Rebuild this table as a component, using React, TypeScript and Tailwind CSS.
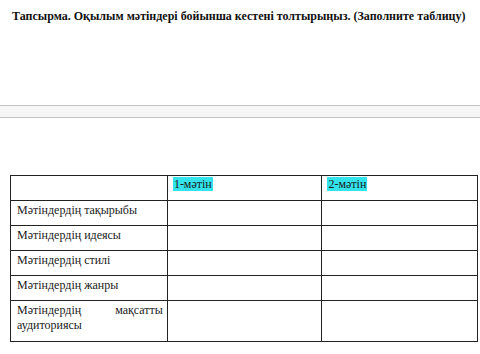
import React from "react";

const rows = [
  "Мәтіндердің тақырыбы",
  "Мәтіндердің идеясы",
  "Мәтіндердің стилі",
  "Мәтіндердің жанры",
];

export default function App() {
  return (
    <div
      className="w-[480px] h-[354px] bg-white text-[#1a1a1a] overflow-hidden"
      style={{ fontFamily: '"Liberation Serif", "Times New Roman", serif' }}
    >
      <div className="pt-[9px] pl-[12px] text-[12px] leading-[15px] font-bold text-[#111] whitespace-nowrap">
        Тапсырма. Оқылым мәтіндері бойынша кестені толтырыңыз. (Заполните таблицу)
      </div>

      <div className="mt-[81px] h-[13px] border-y border-[#c4c4c4] bg-[#f6f6f6]" />

      <table className="mt-[57px] ml-[10px] w-[468px] border-collapse text-[12px] leading-[15px]">
        <colgroup>
          <col className="w-[157px]" />
          <col className="w-[155px]" />
          <col className="w-[156px]" />
        </colgroup>
        <tbody>
          <tr className="h-[25px]">
            <td className="border border-[#222]" />
            <td className="border border-[#222] align-top pl-[5px] pt-[1px]">
              <span className="bg-[#33e3ec] px-[1px]">1-мәтін</span>
            </td>
            <td className="border border-[#222] align-top pl-[5px] pt-[1px]">
              <span className="bg-[#33e3ec] px-[1px]">2-мәтін</span>
            </td>
          </tr>
          {rows.map((r) => (
            <tr key={r} className="h-[25px]">
              <td className="border border-[#222] align-top pl-[6px] pt-[2px]">{r}</td>
              <td className="border border-[#222]" />
              <td className="border border-[#222]" />
            </tr>
          ))}
          <tr className="h-[41px]">
            <td className="border border-[#222] align-top pl-[6px] pr-[4px] pt-[2px]">
              <div className="flex justify-between">
                <span>Мәтіндердің</span>
                <span>мақсатты</span>
              </div>
              <div>аудиториясы</div>
            </td>
            <td className="border border-[#222]" />
            <td className="border border-[#222]" />
          </tr>
        </tbody>
      </table>
    </div>
  );
}
